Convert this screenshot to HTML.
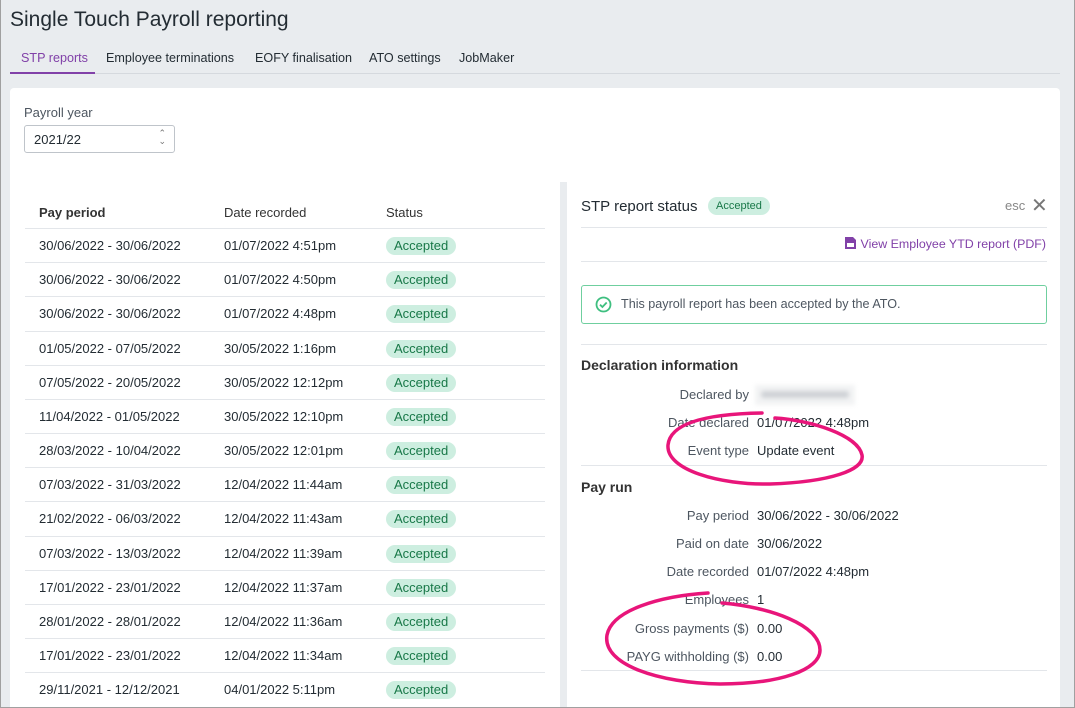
<!DOCTYPE html>
<html><head><style>
*{margin:0;padding:0;box-sizing:border-box}
body{width:1075px;height:708px;background:#e9ecef;font-family:"Liberation Sans",sans-serif;color:#232c33;position:relative;overflow:hidden;font-size:13px}
.frame{position:absolute;left:0;top:0;width:1075px;height:708px;border:1px solid #a0a0a0;border-top:none;pointer-events:none}
.a{position:absolute;white-space:nowrap}
.badge{display:inline-block;background:#cdeee0;color:#187848;border-radius:9px;padding:0 8px;height:18px;line-height:18px;font-size:13px}
.row{position:absolute;left:25px;width:520px;height:34px;border-top:1px solid #e3e6ea}
.row span{position:absolute;top:9px}
.hl{position:absolute;left:581px;width:466px;height:1px;background:#e3e6ea}
.lab{position:absolute;right:326px;color:#4d5660;text-align:right;white-space:nowrap}
.val{position:absolute;left:757px;white-space:nowrap}
.tab{position:absolute;top:51px;font-size:12.6px;white-space:nowrap}
</style></head><body>
<div class="a" style="left:10px;top:8px;font-size:21px;color:#232c33">Single Touch Payroll reporting</div>
<div class="tab" style="left:21px;color:#8141a8">STP reports</div>
<div class="tab" style="left:106px">Employee terminations</div>
<div class="tab" style="left:255px">EOFY finalisation</div>
<div class="tab" style="left:369px">ATO settings</div>
<div class="tab" style="left:459px">JobMaker</div>
<div class="a" style="left:10px;top:73px;width:1050px;height:1px;background:#d5d9de"></div>
<div class="a" style="left:10px;top:72px;width:85px;height:2px;background:#8141a8"></div>

<div class="a" style="left:10px;top:88px;width:1050px;height:94px;background:#fff;border-radius:4px 4px 0 0"></div>
<div class="a" style="left:24px;top:105px;color:#4d5660">Payroll year</div>
<div class="a" style="left:24px;top:125px;width:151px;height:28px;border:1px solid #bfc4ca;border-radius:3px;background:#fff"><span style="position:absolute;left:9px;top:6px">2021/22</span><span style="position:absolute;right:8px;top:3px;color:#777;font-size:9px;line-height:8px">&#8963;<br>&#8964;</span></div>

<div class="a" style="left:10px;top:182px;width:550px;height:526px;background:#fff"></div>
<div class="a" style="left:567px;top:182px;width:493px;height:526px;background:#fff"></div>

<div class="a" style="left:39px;top:205px;font-weight:bold;color:#333">Pay period</div>
<div class="a" style="left:224px;top:205px;color:#333">Date recorded</div>
<div class="a" style="left:386px;top:205px;color:#333">Status</div>

<div class="row" style="top:228px"><span style="left:14px">30/06/2022 - 30/06/2022</span><span style="left:199px">01/07/2022 4:51pm</span><span style="left:361px;top:8px" class="badge">Accepted</span></div>
<div class="row" style="top:262px"><span style="left:14px">30/06/2022 - 30/06/2022</span><span style="left:199px">01/07/2022 4:50pm</span><span style="left:361px;top:8px" class="badge">Accepted</span></div>
<div class="row" style="top:296px"><span style="left:14px">30/06/2022 - 30/06/2022</span><span style="left:199px">01/07/2022 4:48pm</span><span style="left:361px;top:8px" class="badge">Accepted</span></div>
<div class="row" style="top:331px"><span style="left:14px">01/05/2022 - 07/05/2022</span><span style="left:199px">30/05/2022 1:16pm</span><span style="left:361px;top:8px" class="badge">Accepted</span></div>
<div class="row" style="top:365px"><span style="left:14px">07/05/2022 - 20/05/2022</span><span style="left:199px">30/05/2022 12:12pm</span><span style="left:361px;top:8px" class="badge">Accepted</span></div>
<div class="row" style="top:399px"><span style="left:14px">11/04/2022 - 01/05/2022</span><span style="left:199px">30/05/2022 12:10pm</span><span style="left:361px;top:8px" class="badge">Accepted</span></div>
<div class="row" style="top:433px"><span style="left:14px">28/03/2022 - 10/04/2022</span><span style="left:199px">30/05/2022 12:01pm</span><span style="left:361px;top:8px" class="badge">Accepted</span></div>
<div class="row" style="top:467px"><span style="left:14px">07/03/2022 - 31/03/2022</span><span style="left:199px">12/04/2022 11:44am</span><span style="left:361px;top:8px" class="badge">Accepted</span></div>
<div class="row" style="top:501px"><span style="left:14px">21/02/2022 - 06/03/2022</span><span style="left:199px">12/04/2022 11:43am</span><span style="left:361px;top:8px" class="badge">Accepted</span></div>
<div class="row" style="top:536px"><span style="left:14px">07/03/2022 - 13/03/2022</span><span style="left:199px">12/04/2022 11:39am</span><span style="left:361px;top:8px" class="badge">Accepted</span></div>
<div class="row" style="top:570px"><span style="left:14px">17/01/2022 - 23/01/2022</span><span style="left:199px">12/04/2022 11:37am</span><span style="left:361px;top:8px" class="badge">Accepted</span></div>
<div class="row" style="top:604px"><span style="left:14px">28/01/2022 - 28/01/2022</span><span style="left:199px">12/04/2022 11:36am</span><span style="left:361px;top:8px" class="badge">Accepted</span></div>
<div class="row" style="top:638px"><span style="left:14px">17/01/2022 - 23/01/2022</span><span style="left:199px">12/04/2022 11:34am</span><span style="left:361px;top:8px" class="badge">Accepted</span></div>
<div class="row" style="top:672px"><span style="left:14px">29/11/2021 - 12/12/2021</span><span style="left:199px">04/01/2022 5:11pm</span><span style="left:361px;top:8px" class="badge">Accepted</span></div>

<div class="a" style="left:581px;top:198px;font-size:15px">STP report status</div>
<div class="a badge" style="left:708px;top:197px;font-size:11px;padding:0 8px">Accepted</div>
<div class="a" style="left:1005px;top:198px;color:#888">esc</div>
<div class="a" style="left:1031px;top:193px;color:#777;font-size:20px">&#x2715;</div>
<div class="hl" style="top:227px"></div>
<div class="a" style="right:29px;top:236px;color:#8141a8;font-size:12.4px"><svg style="vertical-align:-2px;margin-right:4px" width="13" height="14" viewBox="0 0 13 14"><path d="M1 1h8l3 3v9H1z" fill="#8141a8"/><rect x="3" y="7" width="7" height="4" fill="#fff"/></svg>View Employee YTD report (PDF)</div>
<div class="hl" style="top:261px"></div>
<div class="a" style="left:581px;top:285px;width:466px;height:39px;border:1px solid #6fcf9f;border-radius:3px"></div>
<svg class="a" style="left:595px;top:296px" width="17" height="17" viewBox="0 0 17 17"><circle cx="8.5" cy="8.5" r="7" fill="none" stroke="#3fbf80" stroke-width="1.8"/><path d="M5 8.7l2.4 2.3 4.3-4.5" fill="none" stroke="#3fbf80" stroke-width="1.8"/></svg>
<div class="a" style="left:621px;top:297px;color:#4d5660;font-size:12.6px">This payroll report has been accepted by the ATO.</div>
<div class="hl" style="top:344px"></div>
<div class="a" style="left:581px;top:357px;font-weight:bold;font-size:14px;color:#333">Declaration information</div>
<div class="lab" style="top:387px">Declared by</div>
<div class="a" style="left:755px;top:385px;width:100px;height:20px;background:#f2f3f4;filter:blur(2px)"><div style="margin:6px 6px;height:7px;background:#cfd2d6;border-radius:3px"></div></div>
<div class="lab" style="top:415px">Date declared</div><div class="val" style="top:415px">01/07/2022 4:48pm</div>
<div class="lab" style="top:443px">Event type</div><div class="val" style="top:443px">Update event</div>
<div class="hl" style="top:465px"></div>
<div class="a" style="left:581px;top:479px;font-weight:bold;font-size:14px;color:#333">Pay run</div>
<div class="lab" style="top:508px">Pay period</div><div class="val" style="top:508px">30/06/2022 - 30/06/2022</div>
<div class="lab" style="top:536px">Paid on date</div><div class="val" style="top:536px">30/06/2022</div>
<div class="lab" style="top:564px">Date recorded</div><div class="val" style="top:564px">01/07/2022 4:48pm</div>
<div class="lab" style="top:592px">Employees</div><div class="val" style="top:592px">1</div>
<div class="lab" style="top:621px">Gross payments ($)</div><div class="val" style="top:621px">0.00</div>
<div class="lab" style="top:649px">PAYG withholding ($)</div><div class="val" style="top:649px">0.00</div>
<div class="hl" style="top:670px"></div>

<svg class="a" style="left:0;top:0" width="1075" height="708">
<path d="M762 413 C700 414 670 425 668 445 C666 470 720 485 770 484 C830 482 865 470 862 455 C858 435 810 420 775 418" fill="none" stroke="#e8157a" stroke-width="3.5" stroke-linecap="round"/>
<path d="M708 593 C660 596 612 610 607 635 C602 665 660 683 720 684 C780 684 820 670 820 650 C820 625 770 607 722 603" fill="none" stroke="#e8157a" stroke-width="3.5" stroke-linecap="round"/>
</svg>
<div class="frame"></div>
</body></html>
